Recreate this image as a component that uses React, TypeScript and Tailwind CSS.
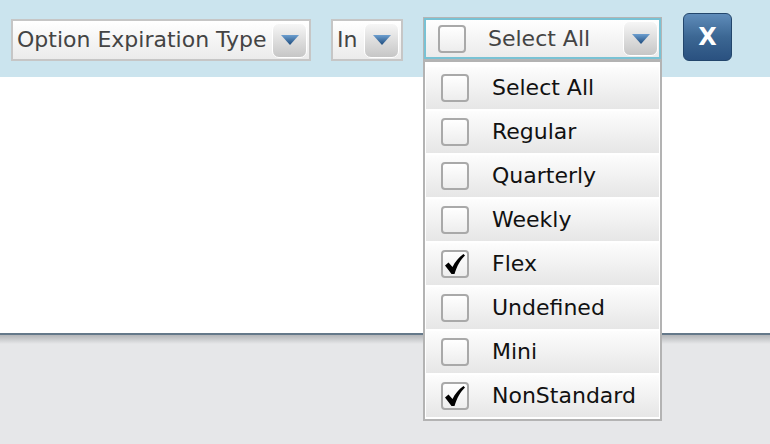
import type { ReactNode } from 'react';

const FONT = "font-['DejaVu_Sans','Verdana',sans-serif]";

const options = [
  { label: 'Select All', checked: false },
  { label: 'Regular', checked: false },
  { label: 'Quarterly', checked: false },
  { label: 'Weekly', checked: false },
  { label: 'Flex', checked: true },
  { label: 'Undefined', checked: false },
  { label: 'Mini', checked: false },
  { label: 'NonStandard', checked: true },
];

const ArrowButton = () => (
  <div className="w-[35px] h-[35px] shrink-0 rounded-[7px] border border-white bg-gradient-to-b from-[#f6f6f6] to-[#c6c6c6] flex items-center justify-center">
    <svg width="20" height="12" viewBox="0 0 20 12">
      <defs>
        <linearGradient id="tri" x1="0" y1="0" x2="0" y2="1">
          <stop offset="0" stopColor="#6d9fd0" />
          <stop offset="1" stopColor="#1c4a7c" />
        </linearGradient>
      </defs>
      <path d="M1 1 H19 L10 11 Z" fill="url(#tri)" />
    </svg>
  </div>
);

const Checkbox = ({ checked }: { checked: boolean }) => (
  <div className="w-[28px] h-[28px] shrink-0 rounded-[4px] border-2 border-[#a9a9a9] bg-gradient-to-b from-white to-[#ededed] flex items-center justify-center">
    {checked && (
      <svg width="22" height="22" viewBox="0 0 22 22">
        <path
          d="M1 12.5 L4.5 9.5 L8.5 14 C11 9 14.5 4.5 19.5 1 L21 2.5 C16.5 7 13 12.5 10.5 21 L7.5 21 Z"
          fill="#000"
        />
      </svg>
    )}
  </div>
);

const SelectBox = ({ children }: { children: ReactNode }) => (
  <div className="h-[42px] flex items-center border-2 border-[#c6c6c6] bg-gradient-to-b from-white to-[#ebebeb] pl-[4px] pr-[2px] gap-[3px] text-[22px] text-[#444]">
    {children}
  </div>
);

export default function App() {
  return (
    <div className={`w-[770px] h-[444px] flex flex-col overflow-hidden ${FONT}`}>
      <div className="h-[77px] bg-[#cbe4ee] flex items-start pl-[11px]">
        <div className="mt-[19px]">
          <SelectBox>
            <span className="w-[252px] leading-none">Option Expiration Type</span>
            <ArrowButton />
          </SelectBox>
        </div>
        <div className="mt-[19px] ml-[20px]">
          <SelectBox>
            <span className="w-[24px] leading-none">In</span>
            <ArrowButton />
          </SelectBox>
        </div>
        <div className="relative mt-[17px] ml-[20px]">
          <div className="w-[239px] border border-[#b5b5b5]">
            <div className="h-[41px] border-2 border-[#79c2d4] bg-gradient-to-b from-white to-[#ebebeb] flex items-center pl-[12px] pr-[1px]">
              <Checkbox checked={false} />
              <span className="ml-[22px] flex-1 text-[22px] leading-none text-[#444]">Select All</span>
              <ArrowButton />
            </div>
          </div>
          <div className="absolute left-0 top-[43px] w-[239px] border-2 border-[#b3b3b3] bg-white px-[1px] pt-[5px] pb-[2px] flex flex-col gap-[2px] z-10">
            {options.map((o) => (
              <div
                key={o.label}
                className="h-[42px] flex items-center pl-[15px] bg-gradient-to-b from-[#fdfdfd] to-[#e6e6e6]"
              >
                <Checkbox checked={o.checked} />
                <span className="ml-[23px] text-[22px] leading-none text-[#111]">{o.label}</span>
              </div>
            ))}
          </div>
        </div>
        <button className="mt-[13px] ml-[21px] w-[49px] h-[48px] rounded-[6px] border border-[#23466c] bg-gradient-to-b from-[#5f8cba] via-[#3c6793] to-[#2a5180] text-white text-[24px] font-bold leading-none flex items-center justify-center">
          X
        </button>
      </div>
      <div className="h-[256px] bg-white" />
      <div className="h-[2px] bg-[#65798a]" />
      <div className="h-[9px] bg-gradient-to-b from-[#b3b5b8] to-[#e6e7e9]" />
      <div className="flex-1 bg-[#e6e7e9]" />
    </div>
  );
}
